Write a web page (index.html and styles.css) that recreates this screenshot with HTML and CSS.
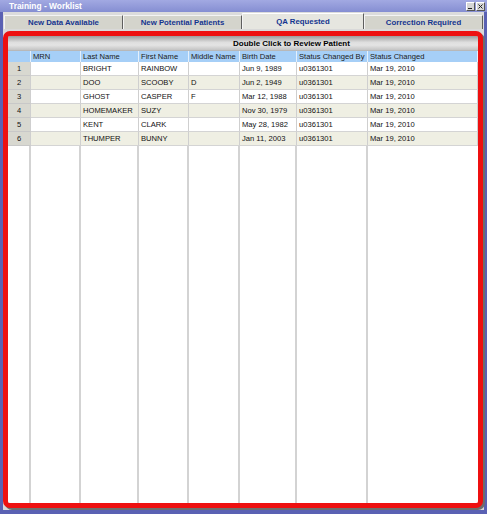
FILE: index.html
```html
<!DOCTYPE html>
<html>
<head>
<meta charset="utf-8">
<link rel="stylesheet" href="styles.css">
</head>
<body>
<div class="window">
  <div class="titlebar">
    <span class="title">Training - Worklist</span>
    <div class="ctrls">
      <span class="cbtn"><svg width="7" height="7" viewBox="0 0 7 7"><rect x="1" y="5" width="4" height="1" fill="#222"/></svg></span>
      <span class="cbtn"><svg width="7" height="7" viewBox="0 0 7 7"><path d="M1.5 1.5 L5.5 5.5 M5.5 1.5 L1.5 5.5" stroke="#222" stroke-width="1"/></svg></span>
    </div>
  </div>
  <div class="content">
    <div class="tabs">
      <div class="tab">New Data Available</div>
      <div class="tab">New Potential Patients</div>
      <div class="tab active">QA Requested</div>
      <div class="tab">Correction Required</div>
    </div>
    <div class="panel">
      <div class="caption">Double Click to Review Patient</div>
      <div class="grid">
        <div class="hc"></div><div class="hc">MRN</div><div class="hc">Last Name</div><div class="hc">First Name</div><div class="hc">Middle Name</div><div class="hc">Birth Date</div><div class="hc">Status Changed By</div><div class="hc">Status Changed</div>

        <div class="rn">1</div><div class="c">&nbsp;</div><div class="c">BRIGHT</div><div class="c">RAINBOW</div><div class="c"></div><div class="c">Jun 9, 1989</div><div class="c">u0361301</div><div class="c">Mar 19, 2010</div>
        <div class="rn">2</div><div class="c alt"></div><div class="c alt">DOO</div><div class="c alt">SCOOBY</div><div class="c alt">D</div><div class="c alt">Jun 2, 1949</div><div class="c alt">u0361301</div><div class="c alt">Mar 19, 2010</div>
        <div class="rn">3</div><div class="c"></div><div class="c">GHOST</div><div class="c">CASPER</div><div class="c">F</div><div class="c">Mar 12, 1988</div><div class="c">u0361301</div><div class="c">Mar 19, 2010</div>
        <div class="rn">4</div><div class="c alt"></div><div class="c alt">HOMEMAKER</div><div class="c alt">SUZY</div><div class="c alt"></div><div class="c alt">Nov 30, 1979</div><div class="c alt">u0361301</div><div class="c alt">Mar 19, 2010</div>
        <div class="rn">5</div><div class="c"></div><div class="c">KENT</div><div class="c">CLARK</div><div class="c"></div><div class="c">May 28, 1982</div><div class="c">u0361301</div><div class="c">Mar 19, 2010</div>
        <div class="rn">6</div><div class="c alt"></div><div class="c alt">THUMPER</div><div class="c alt">BUNNY</div><div class="c alt"></div><div class="c alt">Jan 11, 2003</div><div class="c alt">u0361301</div><div class="c alt">Mar 19, 2010</div>

        <div class="f"></div><div class="f"></div><div class="f"></div><div class="f"></div><div class="f"></div><div class="f"></div><div class="f"></div><div class="f last"></div>
      </div>
    </div>
  </div>
</div>
</body>
</html>
```
FILE: styles.css
```css
html, body {
  margin: 0;
  padding: 0;
}
body {
  width: 487px;
  height: 514px;
  background: #5a61b3;
  font-family: "Liberation Sans", Arial, sans-serif;
  overflow: hidden;
}
.window {
  display: flex;
  flex-direction: column;
  height: 514px;
}
.titlebar {
  height: 12px;
  background: linear-gradient(#a2a9e2, #858ed2);
  display: flex;
  align-items: center;
  justify-content: space-between;
  padding: 0 2px 0 9px;
}
.title {
  color: #fff;
  font-weight: bold;
  font-size: 8.4px;
  line-height: 12px;
}
.ctrls {
  display: flex;
  gap: 1px;
  padding-top: 1px;
}
.cbtn {
  width: 7px;
  height: 7px;
  background: #d6d6d6;
  border: 1px solid;
  border-color: #fff #555 #555 #fff;
  display: flex;
}
.content {
  flex: 1;
  margin: 0 3px 4px 3px;
  background: #d9d9d9;
  display: flex;
  flex-direction: column;
}
.tabs {
  display: grid;
  grid-template-columns: 119px 119px 122px 119px;
  height: 17px;
  padding: 0 1px;
  align-items: end;
  background: #dcdcdc;
}
.tab {
  height: 14px;
  box-sizing: border-box;
  background: #d4d4cc;
  border-top: 1px solid #f4f4f4;
  border-left: 1px solid #f4f4f4;
  border-right: 1px solid #5e5e5e;
  color: #14358f;
  font-weight: bold;
  font-size: 7.8px;
  display: flex;
  align-items: center;
  justify-content: center;
}
.tab.active {
  height: 16px;
  background: #e6e6e0;
  border-top-color: #ffffff;
}
.panel {
  flex: 1;
  margin: 2px 1px 2px 0;
  border: 5px solid #ee1010;
  border-radius: 7px;
  box-shadow: 2px 2px 0 #6e6e6e, inset 0 0 0 1px #ff7a7a;
  display: flex;
  flex-direction: column;
  background: #fff;
  overflow: hidden;
}
.caption {
  height: 15px;
  flex: none;
  background: linear-gradient(#9c9c9c, #dedede 45%, #e4e4e4 65%, #c4c4c4);
  font-weight: bold;
  font-size: 8px;
  color: #000;
  line-height: 15px;
  padding-left: 225px;
  border-bottom: 1px solid #b8b8b8;
  box-sizing: border-box;
}
.grid {
  flex: 1;
  display: grid;
  grid-template-columns: 23px 50px 58px 50px 51px 57px 71px 1fr;
  grid-template-rows: 11px repeat(6, 14px) 1fr;
  font-size: 7.6px;
  color: #111;
  box-shadow: inset 3px 0 3px -2px #b0b0b0;
}
.hc {
  background: #a6cff7;
  border-right: 1px solid #e4f0fc;
  line-height: 11px;
  padding-left: 2px;
  white-space: nowrap;
  overflow: hidden;
  color: #1a1a1a;
}
.hc:last-child {
  border-right: none;
}
.rn {
  background: #d8d8d0;
  border-right: 1px solid #cfcfcf;
  border-bottom: 1px solid #c8c8c8;
  padding-left: 9px;
  line-height: 13px;
  box-sizing: border-box;
}
.c {
  background: #fff;
  border-right: 1px solid #cfcfcf;
  border-bottom: 1px solid #d4d4d4;
  padding-left: 2px;
  line-height: 13px;
  white-space: nowrap;
  overflow: hidden;
  box-sizing: border-box;
}
.c.alt {
  background: #efefe3;
}
.f {
  background: #fff;
  border-right: 2px solid #d3d3d3;
}
.f.last {
  border-right: none;
}
```
